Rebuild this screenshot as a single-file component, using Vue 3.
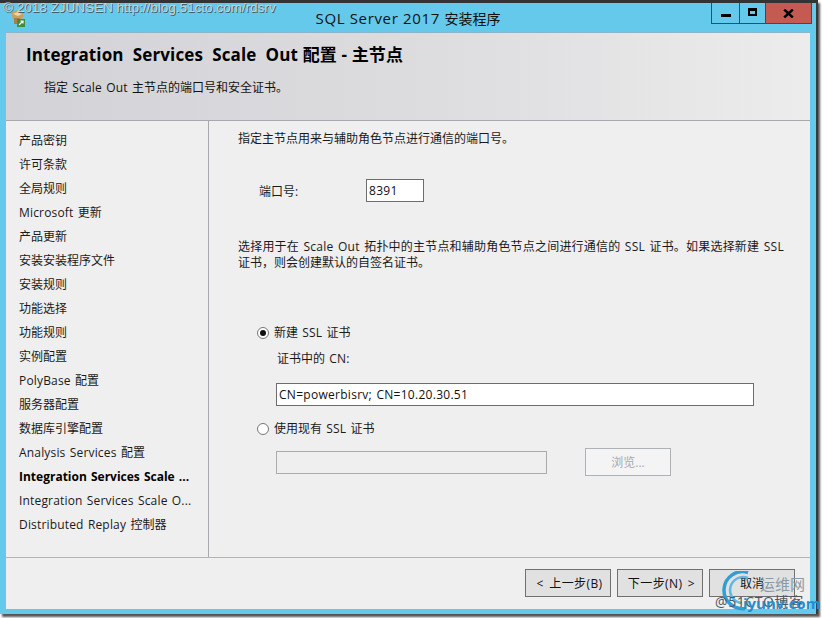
<script setup>
const labels = [
  '产品密钥', '许可条款', '全局规则', 'Microsoft 更新', '产品更新', '安装安装程序文件', '安装规则', '功能选择',
  '功能规则', '实例配置', 'PolyBase 配置', '服务器配置', '数据库引擎配置', 'Analysis Services 配置',
  'Integration Services Scale ...', 'Integration Services Scale O...', 'Distributed Replay 控制器'
]
const steps = labels.map((label, i) => ({
  label,
  active: i === 14,
  parts: label.split(/([\x00-\x7f]+)/).filter(Boolean).map(t => ({ t, latin: /^[\x00-\x7f]/.test(t) }))
}))
</script>

<template>
  <div class="screen">
    <div class="window">
      <div class="titlebar">
        <svg class="appicon" width="18" height="18" viewBox="0 0 18 18">
          <path d="M1 4 L7 1 L13 3 L13 9 L7 12 L3 10 Z" fill="#c9a15f" />
          <path d="M3 5 L8 3 L12 5 L8 7 Z" fill="#ead9ab" />
          <path d="M4 9 h6 v6 h-6 z" fill="#a8803f" />
          <rect x="7" y="10" width="8" height="8" fill="#3f8f3a" />
          <path d="M9 16 L13 12 M10.5 12 H13 V14.5" stroke="#fff" stroke-width="1.2" fill="none" />
        </svg>
        <div class="title"><span class="tl">SQL Server 2017 </span>安装程序</div>
        <div class="controls">
          <div class="ctl ctl-min"><span class="min-glyph"></span></div>
          <div class="ctl ctl-max"><span class="max-glyph"></span></div>
          <div class="ctl ctl-close">
            <svg width="11" height="9" viewBox="0 0 11 9"><path d="M1.2 .5 L9.8 8.5 M9.8 .5 L1.2 8.5" stroke="#000" stroke-width="2.4" fill="none" /></svg>
          </div>
        </div>
      </div>
      <div class="client">
        <header class="head">
          <h1>Integration&nbsp; Services&nbsp; Scale&nbsp; Out 配置 - 主节点</h1>
          <p>指定<span class="l"> Scale Out </span>主节点的端口号和安全证书。</p>
        </header>
        <div class="middle">
          <nav class="side">
            <div v-for="s in steps" :key="s.label" class="step" :class="{ active: s.active }">
              <span v-for="(p, i) in s.parts" :key="i" :class="{ l: p.latin }">{{ p.t }}</span>
            </div>
          </nav>
          <main class="pane">
            <p class="intro">指定主节点用来与辅助角色节点进行通信的端口号。</p>
            <div class="port">
              <label>端口号:</label>
              <div class="input port-input l">8391</div>
            </div>
            <p class="desc"><span class="line1">选择用于在<span class="l"> Scale Out </span>拓扑中的主节点和辅助角色节点之间进行通信的<span class="l"> SSL </span>证书。如果选择新建<span class="l"> SSL</span></span><br>证书，则会创建默认的自签名证书。</p>
            <div class="radio r1"><span class="dot on"></span><span>新建<span class="l"> SSL </span>证书</span></div>
            <div class="cn">证书中的<span class="l"> CN:</span></div>
            <div class="input cn-input l">CN=powerbisrv; CN=10.20.30.51</div>
            <div class="radio r2"><span class="dot"></span><span>使用现有<span class="l"> SSL </span>证书</span></div>
            <div class="existing">
              <div class="input disabled"></div>
              <div class="btn browse">浏览...</div>
            </div>
          </main>
        </div>
        <footer class="foot">
          <div class="btn"><span class="bt">&lt; 上一步(B)</span></div>
          <div class="btn"><span class="bt">下一步(N) &gt;</span></div>
          <div class="btn">取消</div>
        </footer>
      </div>
    </div>
    <div class="wm-top">© 2018 ZJUNSEN http://blog.51cto.com/rdsrv</div>
    <div class="wm-logo">
      <svg width="50" height="46" viewBox="0 0 50 46">
        <path d="M31 1.5 A18.5 18.5 0 1 0 28 37.5" fill="none" stroke="#2f9fd6" stroke-width="3.5" />
        <path d="M31 7 A13 13 0 1 0 25 32" fill="none" stroke="#5db8e2" stroke-width="2.5" />
      </svg>
      <span class="wm-a">运维网</span>
      <span class="wm-b">@51CTO博客</span>
      <span class="wm-c">iyunv.com</span>
    </div>
  </div>
</template>

<style>
html, body { margin: 0; background: #fff; }
</style>

<style scoped>
.screen {
  position: relative;
  width: 822px;
  height: 618px;
  overflow: hidden;
  background: #fff;
  font-family: "Open Sans", "Noto Sans CJK SC", sans-serif;
  font-size: 12px;
  color: #1a1a1a;
}
.l { letter-spacing: .17px; word-spacing: 1px; }
.input.l { letter-spacing: .28px; }
.window {
  width: 818px;
  height: 614px;
  background: #64c9eb;
  border-top: 3px solid #333;
  border-right: 2px solid #3a3a3a;
  box-sizing: border-box;
  box-shadow: 2px 3px 2px #555;
  padding: 0 6px 5px 6px;
  display: flex;
  flex-direction: column;
}
.titlebar {
  position: relative;
  height: 29px;
  display: flex;
  justify-content: center;
  flex: none;
}
.title {
  font-size: 14px;
  line-height: 30px;
  color: #111;
}
.tl { font-size: 15px; letter-spacing: .65px; }
.appicon { position: absolute; left: 4px; top: 6px; }
.controls {
  position: absolute;
  right: -2px;
  top: 0;
  display: flex;
  height: 21px;
  border: 1px solid #27506a;
  border-top: 0;
  box-sizing: border-box;
}
.ctl { display: flex; align-items: center; justify-content: center; height: 100%; box-sizing: border-box; }
.ctl-min { width: 28px; border-right: 1px solid #27506a; }
.ctl-max { width: 26px; border-right: 1px solid #27506a; }
.ctl-close { width: 45px; background: #c45a52; }
.min-glyph { width: 10px; height: 3px; background: #000; margin-top: 5px; }
.max-glyph { border: 2px solid #000; border-top-width: 3px; width: 5px; height: 3px; margin-top: -2px; }
.client {
  flex: 1;
  display: flex;
  flex-direction: column;
  background: #efefef;
  border-top: 1px solid #8fb4c8;
  min-height: 0;
}
.head {
  height: 88px;
  flex: none;
  box-sizing: border-box;
  background: linear-gradient(90deg, #d3d3d7 0%, #dcdcdf 50%, #ececec 100%);
  border-bottom: 1px solid #a9a9ad;
  padding: 11px 20px;
}
.head h1 {
  margin: 0;
  font-size: 17px;
  line-height: 22px;
  font-weight: 700;
  color: #000;
  white-space: nowrap;
  letter-spacing: .14px;
}
.head p { margin: 13px 0 0 18px; line-height: 18px; color: #111; }
.middle { flex: 1; display: flex; min-height: 0; border-bottom: 1px solid #b4b4b4; }
.side {
  width: 203px;
  flex: none;
  box-sizing: border-box;
  border-right: 1px solid #a9a9ad;
  padding: 8px 0 0 13px;
}
.step { height: 24px; line-height: 24px; white-space: nowrap; }
.step.active { font-weight: 700; color: #000; }
.step.active .l { letter-spacing: 0; }
.pane { flex: 1; padding: 8px 22px 0 29px; min-width: 0; }
.intro { margin: 0; line-height: 20px; }
.port { display: flex; align-items: center; margin: 30px 0 0 21px; }
.port label { width: 107px; }
.input {
  box-sizing: border-box;
  border: 1px solid #6d6d6d;
  background: #fff;
  height: 23px;
  line-height: 21px;
  padding: 0 2px;
  color: #111;
}
.port-input { width: 58px; }
.desc { margin: 37px 0 0 0; line-height: 16px; white-space: nowrap; }
.line1 { letter-spacing: .2px; }
.line1 .l { letter-spacing: .28px; }
.radio { display: flex; align-items: center; line-height: 18px; margin-left: 19px; }
.r1 { margin-top: 53px; }
.r2 { margin-top: 14px; }
.dot {
  width: 12px; height: 12px; box-sizing: border-box;
  border: 1px solid #777; border-radius: 50%; background: #fff;
  margin-right: 5px; position: relative; flex: none;
}
.dot.on::after {
  content: ""; position: absolute; left: 2px; top: 2px; width: 6px; height: 6px;
  border-radius: 50%; background: #111;
}
.cn { margin: 8px 0 0 39px; line-height: 18px; }
.cn-input { width: 478px; margin: 15px 0 0 38px; }
.existing { display: flex; align-items: center; gap: 38px; margin: 10px 0 0 38px; }
.disabled { width: 271px; background: #efefef; border-color: #ababab; }
.foot {
  height: 51px;
  flex: none;
  box-sizing: border-box;
  display: flex;
  justify-content: flex-end;
  gap: 6px;
  padding: 11px 15px 0 0;
}
.btn {
  width: 86px;
  height: 28px;
  box-sizing: border-box;
  border: 1px solid #707070;
  background: #e1e1e1;
  display: flex;
  align-items: center;
  justify-content: center;
  color: #111;
  flex: none;
}
.bt { letter-spacing: .4px; word-spacing: 2px; margin-left: 3px; }
.browse { background: #f4f4f4; border-color: #adb2b5; color: #a9a9a9; }
.wm-top {
  position: absolute;
  left: 3px;
  top: 0;
  font-family: "Liberation Sans", sans-serif;
  font-size: 13.5px;
  line-height: 15px;
  color: #cbd2d6;
  text-shadow: 1px 1px 0 #3f5f70;
  white-space: nowrap;
}
.wm-logo { position: absolute; left: 715px; top: 570px; width: 107px; height: 48px; }
.wm-logo svg { position: absolute; left: 2px; top: 1px; }
.wm-a { position: absolute; left: 45px; top: 4px; font-size: 15px; line-height: 20px; color: #8c9aa3; font-family: "Noto Sans CJK SC", sans-serif; white-space: nowrap; }
.wm-b { position: absolute; left: 0; top: 24px; font-size: 14px; line-height: 16px; color: #4c5660; white-space: nowrap; letter-spacing: .6px; }
.wm-c { position: absolute; left: 28px; top: 24px; font-size: 15px; line-height: 18px; font-weight: 700; color: #1f8fd0; white-space: nowrap; }
</style>
